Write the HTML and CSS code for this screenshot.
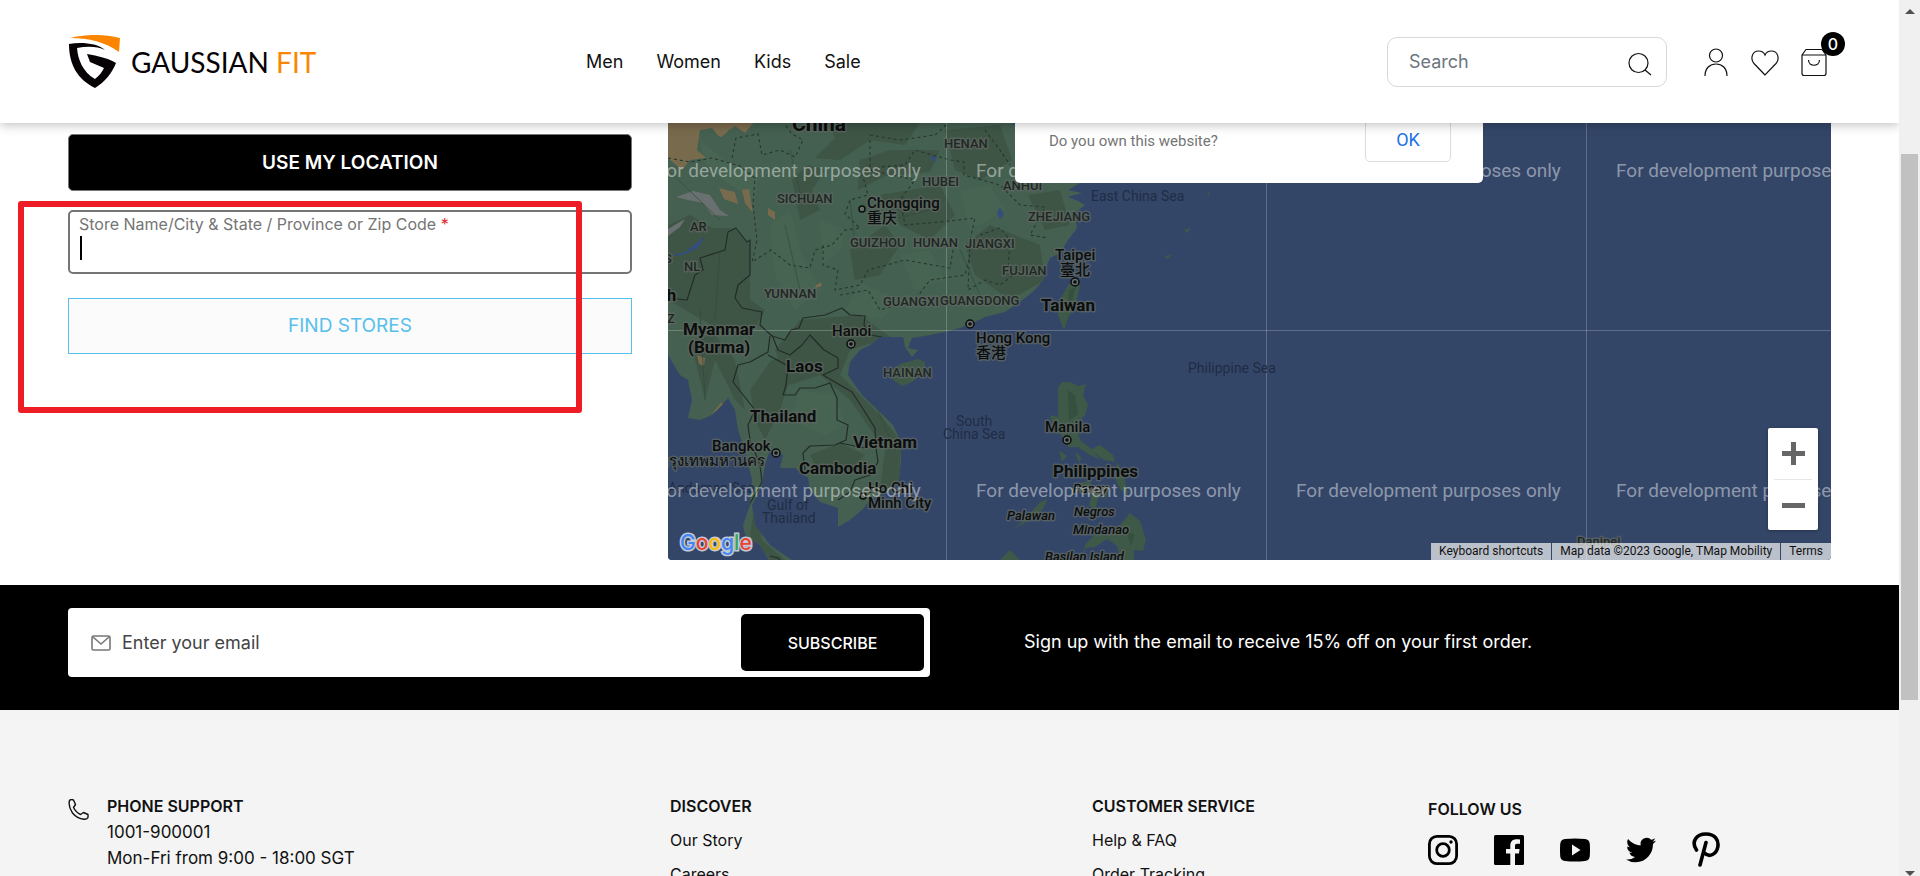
FILE: index.html
```html
<!DOCTYPE html>
<html lang="en">
<head>
<meta charset="utf-8">
<title>Gaussian Fit - Store Locator</title>
<link rel="stylesheet" href="styles.css">
</head>
<body>
<div class="page">
  <header class="header">
    <a class="logo" href="#" aria-label="Gaussian Fit home">
      <svg class="logo-mark" viewBox="67 34 53 55" aria-hidden="true">
        <path fill="#fb8500" d="M69 38C80 35 102 33 119 38L118 52C104 42 88 38 69 38Z"/>
        <path fill="#060205" d="M68 44C80 42 96 43 104 50C96 46 86 46 76 48C77 60 82 72 94 79C98 76 101 72 103 68L89 62L86 54C97 56 107 58 115 63C111 73 104 82 94 88C76 79 68 64 68 44Z"/>
      </svg>
      <span class="logo-text">GAUSSIAN <span class="logo-accent">FIT</span></span>
    </a>
    <nav class="nav">
      <a href="#">Men</a><a href="#">Women</a><a href="#">Kids</a><a href="#">Sale</a>
    </nav>
    <div class="tools">
      <form class="search">
        <input type="search" placeholder="Search" aria-label="Search">
        <button type="button" aria-label="Submit search">
          <svg viewBox="0 0 24 24" width="24" height="24" class="line"><circle cx="10.500" cy="11" r="9.500"/><path d="M17 18l6 5"/></svg>
        </button>
      </form>
      <a class="tool" href="#" aria-label="Account"><svg class="line" width="26" height="28" viewBox="0 0 26 28"><circle cx="13" cy="7.500" r="6.500"/><path d="M2 28c0-8 5-12 11-12s11 4 11 12"/></svg></a>
      <a class="tool" href="#" aria-label="Wishlist"><svg class="line" width="28" height="28" viewBox="0 0 28 28"><path d="M14 27L3 15.500C-1 11 1 3 7.500 3C10.500 3 13 4.500 14 7C15 4.500 17.500 3 20.500 3C27 3 29 11 25 15.500Z"/></svg></a>
      <a class="tool" href="#" aria-label="Cart"><svg class="line" width="26" height="28" viewBox="0 0 26 28"><path d="M1 7L5 1.500H21L25 7V25.500Q25 27.500 23 27.500H3Q1 27.500 1 25.500ZM1 7H25M7.500 12c0 7 11 7 11 0"/></svg><span class="badge">0</span></a>
    </div>
  </header>

  <main class="stores">
    <form class="finder">
      <button class="btn-location" type="button">USE MY LOCATION</button>
      <div class="field">
        <label for="store">Store Name/City &amp; State / Province or Zip Code <span class="required">*</span></label>
        <input id="store" type="text">
        <span class="caret"></span>
      </div>
      <button class="btn-find" type="button">FIND STORES</button>
    </form>

    <section class="map" aria-label="Store map">
      <svg class="map-art" viewBox="668 123 1163 437" preserveAspectRatio="xMinYMin slice">
        <defs>
          <clipPath id="mainland"><path d="M660 115H1015L1080 183L1068 190L1082 193L1068 197L1078 201L1085 205L1075 213L1077 228L1068 240L1060 253L1050 258L1045 270L1043 280L1035 290L1020 302L1005 312L985 317L975 322L960 328L945 332L930 335L912 338L908 348L918 350L912 357L905 347L903 337L880 337L870 345L860 350L850 362L848 375L862 395L880 412L893 425L900 440L901 460L899 480L890 490L870 500L862 510L850 520L838 527V508L820 502L810 490L808 478L795 468L780 468L783 455L770 450L765 465L762 485L752 505L755 525L770 545L780 552L795 562H770L760 545L745 535L743 525L750 505L752 480L745 450L738 430L735 410L728 398L722 405L712 415L700 420L688 418L692 400L688 380L680 375L668 355H660Z"/></clipPath>
          <g id="capital"><circle r="4" fill="#68706d" stroke="#0b0d0c" stroke-width="1.500"/><circle r="1.800" fill="#0b0d0c"/></g>
        </defs>
        <rect x="668" y="123" width="1163" height="437" fill="#344668"/>
        <g clip-path="url(#mainland)">
          <rect x="660" y="115" width="440" height="450" fill="#456050"/>
          <g fill="#3e5545">
            <path d="M668 225L690 215L712 228L735 228L750 245V300L765 310L750 337L720 330L668 300Z"/>
            <path d="M825 115H925L905 145L870 140L840 160L815 158L835 138Z"/>
            <path d="M792 180L808 165L825 170L812 190L820 210L800 220Z"/>
            <path d="M860 160L890 150L940 150L930 172L885 176L858 190Z"/>
            <path d="M945 130L1000 125L1012 160L980 180L955 170Z"/>
            <path d="M880 195L940 185L955 215L930 240L900 225Z"/>
            <path d="M965 245L990 225L1040 245L1045 280L1010 300L975 275Z"/>
            <path d="M1028 195L1060 190L1070 225L1045 230Z"/>
            <path d="M800 320L860 315L890 337L850 350L840 375L880 415L900 440V485L880 490L885 450L850 400L820 375L790 385L775 350Z"/>
            <path d="M690 340L715 335L735 360L745 410L735 400L715 360L705 400Z"/>
            <path d="M770 362L785 354L790 380L780 410L765 440L755 420L750 390Z"/>
            <path d="M810 455L840 443L865 455L850 470L820 475Z"/>
            <path d="M755 500L762 540L785 560H770L750 535Z"/>
            <path d="M850 250L885 225L900 245L880 275L855 280Z"/>
          </g>
          <g fill="#4b6754" opacity=".5">
            <path d="M700 140L730 165L760 170L755 200L730 185L705 165Z"/><path d="M770 225L790 210L800 250L820 290L795 310L775 275Z"/>
            <path d="M820 220L845 230L840 250L822 265Z"/><path d="M900 255L930 250L945 280L915 290Z"/><path d="M800 390L835 395L845 425L825 435L790 420Z"/><path d="M960 190L990 185L1005 210L970 230Z"/><path d="M860 283L900 300L880 320L845 310Z"/>
          </g>
          <g fill="#786a4d"><path d="M660 115H760L745 133L735 126L720 138L712 128L700 130L697 150L706 158L690 160L682 170L668 158Z"/><path d="M719 188L735 192L738 204L724 199ZM742 190L749 189L753 213L745 203ZM768 208L775 212V220L768 215ZM816 285L821 282L822 286L815 288ZM697 355L705 358L704 366L699 364ZM712 413L722 402L724 409ZM726 399L730 406L727 400Z"/></g>
          <path fill="#456050" d="M703 138L712 132L722 138L730 129L738 133L728 142L715 139L706 146Z"/>
          <path fill="#697070" d="M676 197L693 191L710 195L720 210L729 216L712 215L703 203L688 200ZM668 229L685 219L680 227L668 236Z"/>
          <g fill="#334e7d"><path d="M668 256L685 252L705 236L698 248L683 255ZM1000 207L1004 215L1000 219L997 213ZM930 157L936 155L935 163ZM1010 122L1016 120V127Z"/></g>
          <g fill="none" stroke="#273630" stroke-width="1.100" stroke-dasharray="3 3">
            <path d="M732 158L736 138L758 134L762 155L780 150L795 157L803 140L792 134L784 123M668 158L690 162L712 158L740 166L755 178L753 205L757 240L752 262L771 250L790 265L810 268L815 250L832 245L845 230L860 228L845 214L850 200L868 195L862 173L880 167L905 165L915 150L950 160L964 162V175L1000 185L1020 205L1045 207L1030 235L1048 238"/>
            <path d="M870 135L900 140L935 135L946 125M870 140V170L915 180L900 200L905 225L940 222L975 218L970 240L968 290L985 280L1000 285L1020 270M985 130L1000 150L1010 165M823 245V265L838 270L835 290L860 285L868 270L905 260L950 268L953 250M840 295L868 290L880 310L915 300L930 280L965 275L970 255M980 235L1000 228L1010 240L1008 270"/>
          </g>
          <g fill="none" stroke="#232c28" stroke-width="1.200" stroke-linejoin="round">
            <path d="M668 298L687 300L695 275L703 270L700 258L725 250L728 232L736 228L747 242L750 240V275L738 285L735 298L742 308L762 312L760 325L772 336L785 340L791 330L799 328L803 318L825 315L842 308L850 315L865 316L864 325L870 335L882 337"/>
            <path d="M770 336L768 352L750 362L738 365L733 382L755 410L748 425L750 440L760 465L762 482L748 507M772 335L778 350L790 355L802 345L810 335L824 350L838 358V368L823 375L852 392L865 412L875 428L876 448L878 462L870 475L855 480L850 492L838 500M768 355L788 366L786 385L783 395L795 395L800 388L815 388L830 383L837 398V420L848 425L846 440L835 445L810 446L803 453L805 470M840 443L865 448M770 556L778 558L782 562"/>
          </g>
          <path d="M668 170L720 220M785 225L800 290M790 150L802 200M850 200L855 245M890 220L930 210M960 250L980 295M700 310L705 400M720 250L715 320M865 380L895 450" fill="none" stroke="#344a3c" opacity=".7"/>
        </g>
        <g fill="#3e5947">
          <path d="M1075 280L1080 285L1076 305L1068 318L1064 330L1058 315L1060 300L1068 285ZM900 364L918 359L925 362L924 372L912 382L902 386L893 380L892 370Z"/>
          <path d="M1062 382L1070 382L1078 386L1086 384L1083 395L1088 405L1085 415L1076 425L1080 440L1090 448L1100 460L1090 455L1078 447L1068 447L1065 440L1052 425L1050 415L1058 417V388ZM1059 450L1067 456L1062 462ZM1075 452L1082 458L1079 463ZM1090 450L1100 445L1113 455L1115 462L1104 460ZM1080 483L1091 480L1089 492L1079 492ZM1093 490L1101 488L1095 510L1089 506ZM1103 487L1109 485L1106 500ZM1117 462L1124 475L1128 495L1120 489L1115 478ZM1013 529L1025 520L1040 502L1048 499L1042 510L1025 523Z"/>
          <path d="M1082 560L1085 545L1095 534L1109 535L1120 525L1130 513L1140 521L1146 540L1143 551L1134 550V560H1120L1117 546L1107 539L1095 547L1086 548ZM1000 560L1010 550L1020 560ZM1184 230L1191 228L1187 233ZM1165 256L1172 255L1167 259ZM1207 195L1210 191L1209 197Z"/>
        </g>
        <path d="M1069 290L1076 287L1067 317ZM1068 390L1075 395L1078 414L1069 421M1126 530L1135 535L1131 546" fill="#304b39" opacity=".6"/>
        <path class="tile-lines" d="M946.500 123V560M1266.500 123V560M1586.500 123V560M668 330.500H1831"/>

        <g class="region"><text x="944" y="148">HENAN</text><text x="922" y="186">HUBEI</text><text x="1003" y="190">ANHUI</text><text x="777" y="203">SICHUAN</text><text x="850" y="247">GUIZHOU</text><text x="913" y="247">HUNAN</text><text x="965" y="248">JIANGXI</text><text x="1028" y="221">ZHEJIANG</text><text x="1002" y="275">FUJIAN</text><text x="883" y="306">GUANGXI</text><text x="940" y="305">GUANGDONG</text><text x="764" y="298">YUNNAN</text><text x="690" y="231">AR</text><text x="684" y="271">NL</text><text x="664" y="263">S</text><text x="667" y="323">Z</text><text x="883" y="377">HAINAN</text></g>
        <g class="city"><text x="867" y="208">Chongqing</text><text x="867" y="223">重庆</text><text x="1055" y="260">Taipei</text><text x="1060" y="275">臺北</text><text x="832" y="336">Hanoi</text><text x="976" y="343">Hong Kong</text><text x="976" y="358">香港</text><text x="712" y="451">Bangkok</text><text x="660" y="466">กรุงเทพมหานคร</text><text x="868" y="493">Ho Chi</text><text x="868" y="508">Minh City</text><text x="1045" y="432">Manila</text></g>
        <g class="country"><text x="792" y="131" class="big">China</text><text x="1041" y="311">Taiwan</text><text x="683" y="335">Myanmar</text><text x="688" y="353">(Burma)</text><text x="658" y="301">sh</text><text x="786" y="372">Laos</text><text x="750" y="422">Thailand</text><text x="853" y="448">Vietnam</text><text x="799" y="474">Cambodia</text><text x="1053" y="477">Philippines</text></g>
        <g class="island"><text x="1073" y="493">Panay</text><text x="1007" y="520">Palawan</text><text x="1074" y="516">Negros</text><text x="1073" y="534">Mindanao</text><text x="1045" y="561">Basilan Island</text></g>
        <g class="sea"><text x="1091" y="201">East China Sea</text><text x="1188" y="373">Philippine Sea</text><text x="956" y="426">South</text><text x="943" y="439">China Sea</text><text x="767" y="510">Gulf of</text><text x="762" y="523">Thailand</text><text x="668" y="493">Andaman Sea</text></g>
        <g class="region"><text x="1577" y="546">Danipei</text></g>
        <circle cx="862" cy="209" r="3" fill="#68706d" stroke="#0b0d0c" stroke-width="1.500"/>
        <circle cx="863" cy="496" r="3" fill="#68706d" stroke="#0b0d0c" stroke-width="1.500"/>
        <use href="#capital" x="1075" y="282"/><use href="#capital" x="970" y="324"/><use href="#capital" x="851" y="344"/><use href="#capital" x="776" y="453"/><use href="#capital" x="1067" y="440"/>
        <g class="watermark"><text x="656" y="177">For development purposes only</text><text x="976" y="177">For development purposes only</text><text x="1296" y="177">For development purposes only</text><text x="1616" y="177">For development purposes only</text><text x="656" y="497">For development purposes only</text><text x="976" y="497">For development purposes only</text><text x="1296" y="497">For development purposes only</text><text x="1616" y="497">For development purposes only</text></g>
        <text class="google" x="680" y="550"><tspan fill="#4285f4">G</tspan><tspan fill="#ea4335">o</tspan><tspan fill="#fbbc05">o</tspan><tspan fill="#4285f4">g</tspan><tspan fill="#34a853">l</tspan><tspan fill="#ea4335">e</tspan></text>
      </svg>
      <div class="dialog" role="dialog" aria-label="Map notice">
        <a href="#">Do you own this website?</a>
        <button type="button">OK</button>
      </div>
      <div class="zoom">
        <button type="button" aria-label="Zoom in"><svg width="23" height="23" viewBox="0 0 23 23"><path d="M9 0h5v9h9v5h-9v9H9v-9H0V9h9z" fill="#666"/></svg></button>
        <button type="button" aria-label="Zoom out"><svg width="23" height="23" viewBox="0 0 23 23"><path d="M0 9h23v5H0z" fill="#666"/></svg></button>
      </div>
      <div class="credits"><button type="button">Keyboard shortcuts</button><span>Map data ©2023 Google, TMap Mobility</span><a href="#">Terms</a></div>
    </section>
    <div class="highlight"></div>
  </main>

  <section class="newsletter">
    <form class="subscribe">
      <svg width="20" height="16" viewBox="0 0 20 16" fill="none" stroke="#777" stroke-width="1.600" aria-hidden="true"><rect x="1" y="1" width="18" height="14" rx="1.500"/><path d="M2 2l8 7l8-7"/></svg>
      <input type="email" placeholder="Enter your email" aria-label="Email">
      <button type="button">SUBSCRIBE</button>
    </form>
    <p>Sign up with the email to receive 15% off on your first order.</p>
  </section>

  <footer class="footer">
    <section class="support">
      <svg width="21" height="21" viewBox="0 0 21 21" fill="none" stroke="#111" stroke-width="1.400" stroke-linejoin="round" aria-hidden="true"><path d="M1.500 1.500Q3 0 5.500 1L7.500 5.500L5.500 8.500Q8 13.500 12.500 15.500L15.500 13.500L20 15.500V18.500Q19 20.500 16 20.300Q9 19.500 4.500 14Q0 7.500 1.500 1.500Z"/></svg>
      <div><h2>PHONE SUPPORT</h2><p>1001-900001</p><p>Mon-Fri from 9:00 - 18:00 SGT</p></div>
    </section>
    <section class="links"><h2>DISCOVER</h2><a href="#">Our Story</a><a href="#">Careers</a></section>
    <section class="links"><h2>CUSTOMER SERVICE</h2><a href="#">Help &amp; FAQ</a><a href="#">Order Tracking</a></section>
    <section class="follow">
      <h2>FOLLOW US</h2>
      <div class="social">
        <a href="#" aria-label="Instagram"><svg width="30" height="30" viewBox="0 0 30 30" fill="none" stroke="#000" stroke-width="2.800"><rect x="1.400" y="1.400" width="27.200" height="27.200" rx="7.500"/><circle cx="15" cy="15" r="6.300"/><circle cx="23" cy="7" r="1.700" fill="#000" stroke="none"/></svg></a>
        <a href="#" aria-label="Facebook"><svg width="30" height="30" viewBox="0 0 30 30"><path d="M1.500 0h27Q30 0 30 1.500v27Q30 30 28.500 30H21V18.500h4l.6-4.500H21v-3c0-1.500.5-2.300 2.300-2.300H26V4.500C25 4.300 24 4.200 22.500 4.200C19 4.200 16.300 6.300 16.300 10.300V14H12v4.500h4.300V30H1.500Q0 30 0 28.500v-27Q0 0 1.500 0Z"/></svg></a>
        <a href="#" aria-label="YouTube"><svg width="30" height="30" viewBox="0 0 30 30"><path fill-rule="evenodd" d="M5 4Q15 3 25 4Q29.500 4.300 29.800 9Q30.200 15 29.800 21Q29.500 25.500 25 26Q15 27 5 26Q.5 25.500 .2 21Q-.2 15 .2 9Q.5 4.300 5 4ZM12 9.500V20.500L20.500 15Z"/></svg></a>
        <a href="#" aria-label="Twitter"><svg width="30" height="30" viewBox="0 0 24 24"><path d="M23.953 4.570a10 10 0 01-2.825.775 4.958 4.958 0 002.163-2.723c-.951.555-2.005.959-3.127 1.184a4.920 4.920 0 00-8.384 4.482C7.690 8.095 4.067 6.130 1.640 3.162a4.822 4.822 0 00-.666 2.475c0 1.710.870 3.213 2.188 4.096a4.904 4.904 0 01-2.228-.616v.060a4.923 4.923 0 003.946 4.827 4.996 4.996 0 01-2.212.085 4.936 4.936 0 004.604 3.417 9.867 9.867 0 01-6.102 2.105c-.390 0-.779-.023-1.170-.067a13.995 13.995 0 007.557 2.209c9.053 0 13.998-7.496 13.998-13.985 0-.210 0-.420-.015-.630A9.935 9.935 0 0024 4.590z"/></svg></a>
        <a href="#" aria-label="Pinterest"><svg width="28" height="35" viewBox="0 0 28 35" fill="none" stroke="#000" stroke-width="3.600" stroke-linecap="round"><path d="M4.500 18C-1 10 4 2 14 2C23 2 27 8 25.800 15C24.500 22 17.500 26 12.500 21M14 10.500L8 33"/></svg></a>
      </div>
    </section>
  </footer>
</div>
<div class="scrollbar" aria-hidden="true"><span class="arrow up"></span><span class="thumb"></span><span class="arrow down"></span></div>
</body>
</html>
```

FILE: styles.css
```css
* { box-sizing: border-box; }
body { margin: 0; height: 100vh; overflow: hidden; display: grid; grid-template-columns: minmax(0, 1fr) 21px; background: #fff; color: #111; font: 400 17px/26px Inter, "Liberation Sans", sans-serif; }
a { color: inherit; text-decoration: none; }
button, input { font: inherit; }
h2, p { margin: 0; }
.page { height: 100vh; overflow: hidden; }

.header { position: relative; z-index: 3; display: flex; align-items: center; min-height: 123px; padding: 0 68px; background: #fff; box-shadow: 0 2px 10px rgba(0, 0, 0, .25); }
.logo { display: flex; align-items: center; gap: 10px; width: 518px; }
.logo-mark { width: 53px; height: 55px; }
.logo-text { font: 400 28px/32px Lato, sans-serif; color: #060205; }
.logo-accent { color: #fb8500; }
.nav { display: flex; gap: 33px; font-size: 18px; }
.tools { display: flex; align-items: center; gap: 22px; margin-left: auto; padding-right: 4px; }
.search { display: flex; align-items: center; width: 280px; height: 50px; margin-right: 14px; padding: 0 14px 0 21px; border: 1px solid #d8d8d8; border-radius: 10px; font-size: 18px; }
.search input { flex: 1; min-width: 0; padding: 0; border: 0; outline: 0; background: none; }
.search input::placeholder { color: #6c757d; opacity: 1; }
.search button { display: flex; padding: 4px 0 0; border: 0; background: none; }
.line { fill: none; stroke: #111; stroke-width: 1.2; }
.tool { position: relative; display: flex; }
.badge { position: absolute; top: -16px; right: -18px; width: 24px; height: 24px; border-radius: 12px; background: #000; color: #fff; font-size: 16px; font-weight: 500; line-height: 24px; text-align: center; }

.stores { position: relative; display: grid; grid-template-columns: 564fr 1163fr; gap: 36px; padding: 0 68px 25px; }
.finder { display: flex; flex-direction: column; padding-top: 11px; }
.btn-location { height: 57px; border: 1px solid #757575; border-radius: 5px; background: #000; color: #fff; font-size: 19px; font-weight: 600; }
.field { position: relative; height: 64px; margin: 19px 0 24px; }
.field label { position: absolute; top: 4px; left: 11px; font-size: 16px; line-height: 20px; color: #757575; }
.required { color: #e02b27; }
.field input { width: 100%; height: 100%; padding: 20px 12px 4px; border: 2px solid #757575; border-radius: 5px; outline: 0; }
.caret { position: absolute; left: 12px; top: 26px; width: 2px; height: 24px; background: #000; }
.btn-find { height: 56px; border: 1px solid #57bfeb; background: #fbfbfb; color: #57bfeb; font-size: 19px; }
.highlight { position: absolute; left: 18px; top: 78px; width: 30%; max-width: 564px; height: 212px; border: 6px solid #ee1c25; border-radius: 3px; pointer-events: none; }

.map { position: relative; height: 437px; overflow: hidden; border-radius: 0 0 4px 4px; background: #344668; font-family: Roboto, sans-serif; }
.map-art { display: block; width: 100%; height: 100%; }
.tile-lines { fill: none; stroke: #fff; stroke-opacity: .22; }
.map-art text { font-family: Roboto, "Noto Sans CJK SC", sans-serif; }
.region, .city, .country, .island { fill: #0c0e0d; stroke: #606864; stroke-width: 3px; stroke-opacity: .7; stroke-linejoin: round; paint-order: stroke; }
.region { font-size: 13px; font-weight: 500; fill: #202824; }
.city { font-size: 15px; font-weight: 500; }
.country { font-size: 17px; font-weight: 700; }
.country .big { font-size: 21px; }
.island { font-size: 13px; font-weight: 500; font-style: italic; }
.sea { font-size: 14px; fill: #202c44; }
.watermark { font-size: 19px; fill: #fff; fill-opacity: .45; }
.map-art .google { font: 500 21px Inter, sans-serif; stroke: #c4cad5; stroke-width: 3px; paint-order: stroke; }
.dialog { position: absolute; top: -12px; left: 347px; display: flex; align-items: flex-start; justify-content: space-between; width: 468px; height: 72px; padding: 0 32px 0 34px; border-radius: 5px; background: #fff; }
.dialog a { padding-top: 17px; color: #757575; font-size: 15px; }
.dialog button { width: 86px; height: 51px; padding: 6px 0 0; border: 1px solid #dadce0; border-radius: 5px; background: #fff; color: #1a73e8; font-size: 18px; }
.zoom { position: absolute; right: 13px; bottom: 30px; width: 50px; padding: 0 6px; border-radius: 2px; background: #fff; box-shadow: 0 1px 4px rgba(0, 0, 0, .3); }
.zoom button { display: grid; place-items: center; width: 100%; height: 51px; padding: 0; border: 0; background: none; }
.zoom button + button { border-top: 1px solid #e6e6e6; }
.credits { position: absolute; right: 0; bottom: 0; display: flex; gap: 1px; color: #111; font-size: 12px; line-height: 17px; }
.credits > * { height: 17px; padding: 0 8px; border: 0; background: rgba(245, 245, 245, .7); color: inherit; }

.newsletter { display: grid; grid-template-columns: 862fr 807fr; gap: 94px; align-items: start; padding: 23px 68px 33px; background: #000; color: #fff; font-size: 18px; }
.newsletter p { padding-top: 21px; }
.subscribe { display: flex; align-items: center; gap: 11px; height: 69px; padding: 6px 6px 6px 23px; border-radius: 4px; background: #fff; }
.subscribe input { flex: 1; min-width: 0; padding: 0; border: 0; outline: 0; }
.subscribe input::placeholder { color: #444; opacity: 1; }
.subscribe button { align-self: stretch; width: 183px; border: 0; border-radius: 5px; background: #000; color: #fff; font-size: 16px; font-weight: 500; }

.footer { display: grid; grid-template-columns: 602fr 422fr 336fr 403fr; min-height: 240px; padding: 83px 68px 0; background: #f4f4f4; }
.footer h2 { font-size: 16px; line-height: 26px; font-weight: 600; }
.support { display: flex; align-items: flex-start; gap: 18px; }
.support svg { margin-top: 6px; }
.links { display: flex; flex-direction: column; align-items: flex-start; gap: 8px; font-size: 16px; }
.follow { padding-top: 3px; }
.follow .social { gap: 36px; }
.social { display: flex; align-items: center; padding-top: 10px; }
.social a { display: flex; }

.scrollbar { display: flex; flex-direction: column; align-items: center; height: 100vh; padding: 9px 0 0; background: #f0f0f0; }
.arrow { border: 5px solid transparent; }
.up { border-top: 0; border-bottom-color: #505050; }
.down { margin: auto 0 0; border-bottom: 0; border-top-color: #505050; }
.thumb { width: 17px; height: 63%; margin-top: 140px; background: #c1c1c1; }
```
